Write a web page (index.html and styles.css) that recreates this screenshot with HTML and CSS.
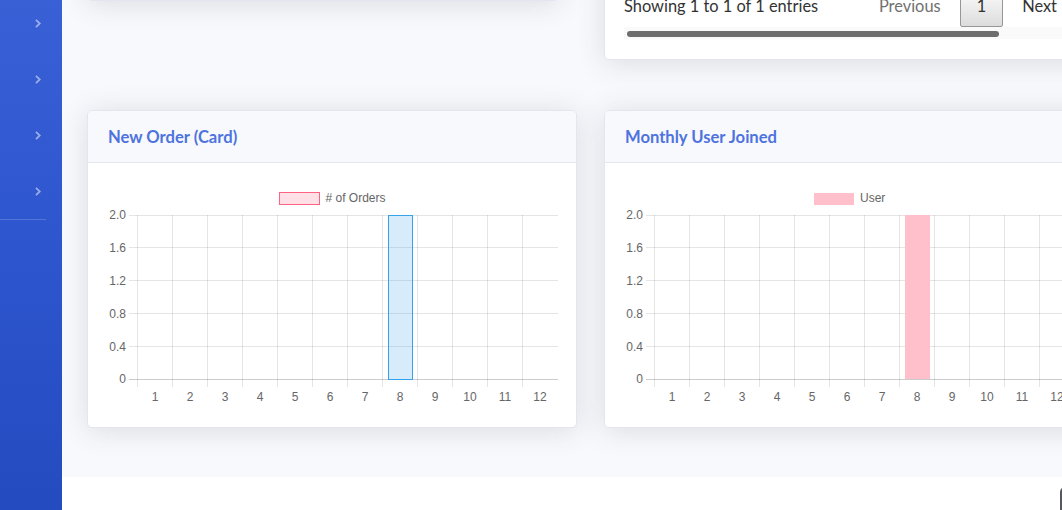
FILE: index.html
```html
<!DOCTYPE html>
<html lang="en">
<head>
<meta charset="utf-8">
<title>Dashboard</title>
<link rel="stylesheet" href="styles.css">
</head>
<body>
<div class="wrapper">
  <nav class="sidebar">
    <ul class="nav">
      <li class="nav-item"><svg class="chev" viewBox="0 0 6 9"><polyline points="1,0.8 4.8,4.5 1,8.2"/></svg></li>
      <li class="nav-item"><svg class="chev" viewBox="0 0 6 9"><polyline points="1,0.8 4.8,4.5 1,8.2"/></svg></li>
      <li class="nav-item"><svg class="chev" viewBox="0 0 6 9"><polyline points="1,0.8 4.8,4.5 1,8.2"/></svg></li>
      <li class="nav-item"><svg class="chev" viewBox="0 0 6 9"><polyline points="1,0.8 4.8,4.5 1,8.2"/></svg></li>
    </ul>
    <hr class="divider">
  </nav>

  <div class="content-wrapper">
    <main class="content">
      <div class="row row-top">
        <div class="card card-top-left"></div>
        <div class="card card-top-right">
          <div class="dt-bottom">
            <div class="dt-info">Showing 1 to 1 of 1 entries</div>
            <div class="dt-paginate">
              <span class="pg disabled">Previous</span>
              <span class="pg current">1</span>
              <span class="pg">Next</span>
            </div>
          </div>
          <div class="scroll-track"><div class="scroll-thumb"></div></div>
        </div>
      </div>

      <div class="row row-charts">
        <div class="card chart-card">
          <div class="card-header"><h6 class="card-title">New Order (Card)</h6></div>
          <div class="card-body">
            <svg class="chart" viewBox="0 0 448 224" width="448" height="224">
              <rect class="legend-box-orders" x="171.5" y="9.5" width="40" height="12"/>
              <text class="legend-text" x="217.5" y="19"># of Orders</text>
              <g class="grid">
                <line x1="21" y1="32.5" x2="450" y2="32.5"/>
                <line x1="21" y1="64.5" x2="450" y2="64.5"/>
                <line x1="21" y1="97.5" x2="450" y2="97.5"/>
                <line x1="21" y1="130.5" x2="450" y2="130.5"/>
                <line x1="21" y1="163.5" x2="450" y2="163.5"/>
                <line x1="29.5" y1="32" x2="29.5" y2="204"/>
                <line x1="64.5" y1="32" x2="64.5" y2="204"/>
                <line x1="99.5" y1="32" x2="99.5" y2="204"/>
                <line x1="134.5" y1="32" x2="134.5" y2="204"/>
                <line x1="169.5" y1="32" x2="169.5" y2="204"/>
                <line x1="204.5" y1="32" x2="204.5" y2="204"/>
                <line x1="239.5" y1="32" x2="239.5" y2="204"/>
                <line x1="274.5" y1="32" x2="274.5" y2="204"/>
                <line x1="309.5" y1="32" x2="309.5" y2="204"/>
                <line x1="344.5" y1="32" x2="344.5" y2="204"/>
                <line x1="379.5" y1="32" x2="379.5" y2="204"/>
                <line x1="414.5" y1="32" x2="414.5" y2="204"/>
              </g>
              <line class="zero" x1="21" y1="196.5" x2="450" y2="196.5"/>
              <rect class="bar-orders" x="280.5" y="32.5" width="24" height="164"/>
              <g class="ylabels">
                <text x="18" y="36">2.0</text>
                <text x="18" y="68.5">1.6</text>
                <text x="18" y="101.5">1.2</text>
                <text x="18" y="134.5">0.8</text>
                <text x="18" y="167.5">0.4</text>
                <text x="18" y="200">0</text>
              </g>
              <g class="xlabels">
                <text x="47" y="217.5">1</text>
                <text x="82" y="217.5">2</text>
                <text x="117" y="217.5">3</text>
                <text x="152" y="217.5">4</text>
                <text x="187" y="217.5">5</text>
                <text x="222" y="217.5">6</text>
                <text x="257" y="217.5">7</text>
                <text x="292" y="217.5">8</text>
                <text x="327" y="217.5">9</text>
                <text x="362" y="217.5">10</text>
                <text x="397" y="217.5">11</text>
                <text x="432" y="217.5">12</text>
              </g>
            </svg>
          </div>
        </div>

        <div class="card chart-card">
          <div class="card-header"><h6 class="card-title">Monthly User Joined</h6></div>
          <div class="card-body">
            <svg class="chart" viewBox="0 0 448 224" width="448" height="224">
              <rect class="legend-box-user" x="189" y="10" width="40" height="12"/>
              <text class="legend-text" x="235" y="19">User</text>
              <g class="grid">
                <line x1="21" y1="32.5" x2="450" y2="32.5"/>
                <line x1="21" y1="64.5" x2="450" y2="64.5"/>
                <line x1="21" y1="97.5" x2="450" y2="97.5"/>
                <line x1="21" y1="130.5" x2="450" y2="130.5"/>
                <line x1="21" y1="163.5" x2="450" y2="163.5"/>
                <line x1="29.5" y1="32" x2="29.5" y2="204"/>
                <line x1="64.5" y1="32" x2="64.5" y2="204"/>
                <line x1="99.5" y1="32" x2="99.5" y2="204"/>
                <line x1="134.5" y1="32" x2="134.5" y2="204"/>
                <line x1="169.5" y1="32" x2="169.5" y2="204"/>
                <line x1="204.5" y1="32" x2="204.5" y2="204"/>
                <line x1="239.5" y1="32" x2="239.5" y2="204"/>
                <line x1="274.5" y1="32" x2="274.5" y2="204"/>
                <line x1="309.5" y1="32" x2="309.5" y2="204"/>
                <line x1="344.5" y1="32" x2="344.5" y2="204"/>
                <line x1="379.5" y1="32" x2="379.5" y2="204"/>
                <line x1="414.5" y1="32" x2="414.5" y2="204"/>
              </g>
              <line class="zero" x1="21" y1="196.5" x2="450" y2="196.5"/>
              <rect class="bar-user" x="280" y="32" width="25" height="164"/>
              <g class="ylabels">
                <text x="18" y="36">2.0</text>
                <text x="18" y="68.5">1.6</text>
                <text x="18" y="101.5">1.2</text>
                <text x="18" y="134.5">0.8</text>
                <text x="18" y="167.5">0.4</text>
                <text x="18" y="200">0</text>
              </g>
              <g class="xlabels">
                <text x="47" y="217.5">1</text>
                <text x="82" y="217.5">2</text>
                <text x="117" y="217.5">3</text>
                <text x="152" y="217.5">4</text>
                <text x="187" y="217.5">5</text>
                <text x="222" y="217.5">6</text>
                <text x="257" y="217.5">7</text>
                <text x="292" y="217.5">8</text>
                <text x="327" y="217.5">9</text>
                <text x="362" y="217.5">10</text>
                <text x="397" y="217.5">11</text>
                <text x="432" y="217.5">12</text>
              </g>
            </svg>
          </div>
        </div>
      </div>
    </main>
    <footer class="footer"></footer>
  </div>
</div>
<a class="scroll-to-top" href="#top" aria-label="Scroll to top"></a>
</body>
</html>
```

FILE: styles.css
```css
* { box-sizing: border-box; }

html, body {
  margin: 0;
  height: 100%;
}

body {
  overflow: hidden;
  background: #fff;
  font-family: Lato, "Noto Sans", "Liberation Sans", sans-serif;
  color: #858796;
}

.wrapper {
  display: flex;
  height: 510px;
}

/* Sidebar */
.sidebar {
  width: 62px;
  flex-shrink: 0;
  background: linear-gradient(180deg, #3a60d6 0%, #2e56cf 45%, #244bbf 100%);
}

.nav {
  list-style: none;
  margin: -5px 0 0;
  padding: 0;
}

.nav-item {
  height: 56px;
  display: flex;
  align-items: center;
  justify-content: flex-end;
  padding-right: 21px;
}

.chev {
  width: 6px;
  height: 9px;
  fill: none;
  stroke: rgba(255, 255, 255, 0.5);
  stroke-width: 1.8;
}

.divider {
  margin: 0 16px 0 0;
  border: 0;
  border-top: 1px solid rgba(255, 255, 255, 0.18);
  height: 0;
}

/* Content */
.content-wrapper {
  flex: 1;
  min-width: 0;
  display: flex;
  flex-direction: column;
  background: #f8f9fc;
  overflow: hidden;
}

.content {
  padding: 0 0 0 25px;
}

.row {
  display: flex;
}

.card {
  flex-shrink: 0;
  background: #fff;
  border: 1px solid #e3e6f0;
  border-radius: 5px;
  box-shadow: 0 2.4px 28px 0 rgba(58, 59, 69, 0.15);
}

/* Top row (partly scrolled out) */
.row-top {
  margin-top: -100px;
  align-items: flex-start;
  gap: 45px;
}

.card-top-left {
  width: 472px;
  height: 101px;
}

.card-top-right {
  width: 491px;
  height: 160px;
  display: flex;
  flex-direction: column;
  justify-content: flex-end;
  padding: 0 20px 20px 19px;
}

.dt-bottom {
  display: flex;
  align-items: baseline;
  justify-content: space-between;
  font-size: 16.4px;
}

.dt-info {
  color: #333;
  padding-bottom: 1px;
}

.dt-paginate {
  display: flex;
  align-items: baseline;
}

.pg {
  padding: 8px 16px;
  margin-left: 2px;
  line-height: 24px;
  border: 1px solid transparent;
  color: #333;
}

.pg.disabled {
  color: #707070;
}

.pg.current {
  border: 1px solid #979797;
  border-radius: 2px;
  background: linear-gradient(180deg, #fff 0%, #dcdcdc 100%);
  color: #333;
  padding: 8px 16px;
}

.scroll-track {
  height: 12px;
  margin-right: -20px;
  background: #fafafa;
  padding: 4px 0 0 3px;
}

.scroll-thumb {
  width: 372px;
  height: 6px;
  border-radius: 3px;
  background: #6e6e6e;
}

/* Chart cards */
.row-charts {
  margin-top: 50px;
  margin-bottom: 49px;
  gap: 27px;
}

.chart-card {
  width: 490px;
  height: 318px;
  overflow: hidden;
}

.card-header {
  height: 52px;
  display: flex;
  align-items: center;
  padding: 0 20px;
  background: #f8f9fc;
  border-bottom: 1px solid #e3e6f0;
}

.card-title {
  margin: 0;
  font-size: 16.6px;
  font-weight: 700;
  color: #4e73df;
}

.card-body {
  padding: 20px;
}

.chart {
  display: block;
  overflow: visible;
  font-family: "Liberation Sans", Arial, sans-serif;
  font-size: 12px;
}

.grid line {
  stroke: rgba(0, 0, 0, 0.1);
  stroke-width: 1;
}

.zero {
  stroke: rgba(0, 0, 0, 0.2);
  stroke-width: 1;
}

.legend-text {
  fill: #666;
}

.ylabels text {
  fill: #666;
  text-anchor: end;
}

.xlabels text {
  fill: #666;
  text-anchor: middle;
}

.legend-box-orders {
  fill: rgba(255, 99, 132, 0.2);
  stroke: rgb(255, 99, 132);
  stroke-width: 1;
}

.bar-orders {
  fill: rgba(54, 162, 235, 0.2);
  stroke: rgb(54, 162, 235);
  stroke-width: 1;
}

.legend-box-user,
.bar-user {
  fill: #ffc0cb;
}

/* Footer */
.footer {
  flex: 1;
  background: #fff;
}

.scroll-to-top {
  position: fixed;
  left: 1060px;
  top: 487px;
  width: 44px;
  height: 44px;
  border-radius: 5px;
  background: #56585f;
}
```
